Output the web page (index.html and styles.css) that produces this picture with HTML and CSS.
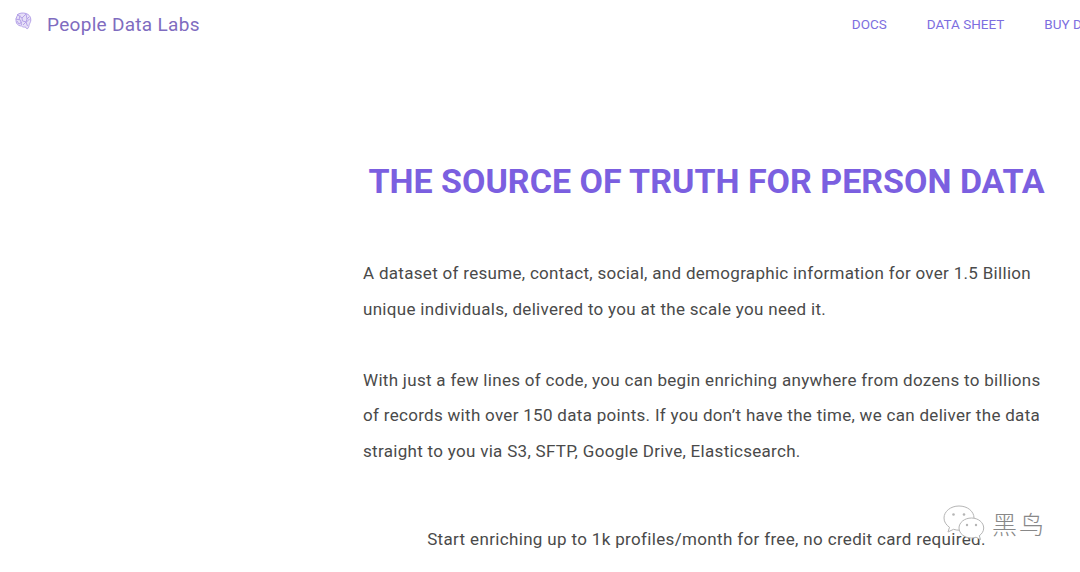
FILE: index.html
```html
<!DOCTYPE html><html><head><meta charset="utf-8"/>
<title>People Data Labs</title>
<link rel="stylesheet" href="styles.css">
</head>
<body>

<header class="top">
	<a class="brand" href="#">
		<svg class="logo" width="20" height="20" viewBox="0 0 20 20" fill="#e6dff7" stroke="#b5a2e8" stroke-width="1">
			<path d="M4 3C6 1 10 .5 13 1.500c3 .8 5 3.500 4.800 6.500 0 2-1 3-1.500 4.500-.5 1.500-.5 3-1.500 4-1 .6-2-.4-2.300-1.500-1.500.3-3 0-4-1-2 0-4-1-5-3-1-2.500-.5-6 1.500-8.500z"/>
			<path fill="none" d="M5 3l4 3 4-4M2.500 7l5 1 1 5M9 6l.5 3 4 1 3-3M13 2l1 5-1 3 1.500 4M6 12l3-2M4 9l2 3M7 3.500L6 8M10 13l3-3M16 5l-2 2"/>
		</svg>
		<span>People Data Labs</span>
	</a>
	<nav class="menu">
		<a href="#">DOCS</a>
		<a href="#">DATA SHEET</a>
		<a href="#">BUY DATA</a>
	</nav>
</header>

<main class="content">
	<h1>THE SOURCE OF TRUTH FOR PERSON DATA</h1>
	<p>A dataset of resume, contact, social, and demographic information for over 1.5 Billion unique individuals, delivered to you at the scale you need it.</p>
	<p>With just a few lines of code, you can begin enriching anywhere from dozens to billions of records with over 150 data points. If you don’t have the time, we can deliver the data straight to you via S3, SFTP, Google Drive, Elasticsearch.</p>
	<p class="free">Start enriching up to 1k profiles/month for free, no credit card required.</p>
</main>

<div class="mark">
	<svg width="44" height="36" viewBox="0 0 44 36" fill="#fff" stroke="#b5b5b5" stroke-width="1">
		<path d="M17 1C8.500 1 2 6.500 2 13c0 4 2.300 7 5.500 9.300L6 27l5.500-2.700c2 .6 3.800.9 5.500.9 8.500 0 15-5.500 15-12.200S25.500 1 17 1z"/>
		<path d="M29.500 13C22.500 13 17 17.500 17 23s5.500 10 12.500 10c1.500 0 3-.3 4.500-.8l4.500 2.300-1.200-3.800c2.700-1.900 4.400-4.600 4.400-7.700 0-5.500-5.500-10-12.200-10z"/>
		<circle cx="11.500" cy="9.500" r="1.300" fill="#b5b5b5" stroke="none"/>
		<circle cx="22" cy="9.500" r="1.300" fill="#b5b5b5" stroke="none"/>
		<circle cx="25" cy="20" r="1.200" fill="#b5b5b5" stroke="none"/>
		<circle cx="34" cy="20" r="1.200" fill="#b5b5b5" stroke="none"/>
	</svg>
	<span>黑鸟</span>
</div>

</body>
</html>
```

FILE: styles.css
```css
html, body {
	height: 100%;
	overflow: hidden;
}
body {
	margin: 0;
	background-color: white;
	color: #4a4a4a;
	font-family: Roboto, "Liberation Sans", sans-serif;
	position: relative;
}
a {
	text-decoration: none;
}
/* top bar */
.top {
	display: flex;
	justify-content: space-between;
	height: 48px;
	padding-left: 13px;
}
.brand {
	display: flex;
	align-items: center;
	gap: 14px;
	height: 48px;
	color: #7f6cc0;
	font-size: 19px;
	letter-spacing: .3px;
}
.logo {
	margin-bottom: 5px;
}
.menu {
	display: flex;
	flex: none;
	gap: 40px;
	height: 48px;
	margin-right: -26px;
	align-items: center;
	font-size: 13.500px;
	font-weight: 400;
}
.menu a {
	color: #7d6ee0;
}
/* main text */
.content {
	margin-left: 363px;
	width: 687px;
	padding-top: 112px;
}
h1 {
	margin: 0 0 54px 0;
	color: #7b5fe0;
	font-size: 34px;
	line-height: 42px;
	font-weight: 700;
	text-align: center;
	white-space: nowrap;
}
p {
	margin: 0 0 35.500px 0;
	font-size: 17px;
	line-height: 35.500px;
	letter-spacing: .3px;
}
.free {
	margin-top: 53px;
	text-align: center;
	width: 687px;
	letter-spacing: .34px;
}
/* watermark */
.mark {
	position: absolute;
	left: 942px;
	top: 505px;
	display: flex;
	align-items: center;
	gap: 6px;
}
.mark span {
	color: #888;
	font-family: "Noto Sans CJK SC", sans-serif;
	font-weight: 300;
	font-size: 25px;
	letter-spacing: 2px;
}
```
